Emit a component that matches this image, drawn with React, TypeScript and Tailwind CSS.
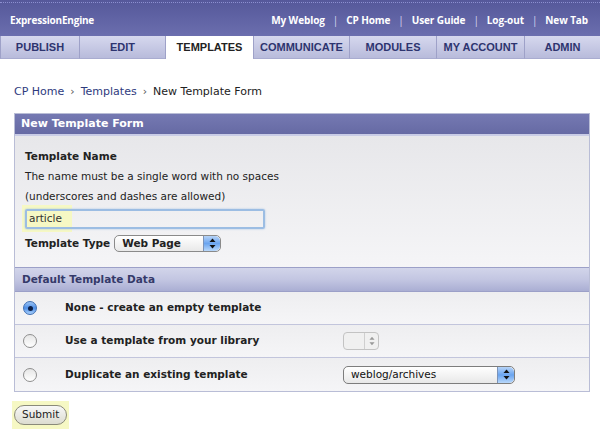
import React from 'react'

const tabs = [
  { label: 'PUBLISH', w: 'w-[79px]' },
  { label: 'EDIT', w: 'w-[86px]' },
  { label: 'TEMPLATES', w: 'w-[88px]', active: true },
  { label: 'COMMUNICATE', w: 'w-[96px]' },
  { label: 'MODULES', w: 'w-[87px]' },
  { label: 'MY ACCOUNT', w: 'w-[88px]' },
  { label: 'ADMIN', w: 'flex-1' },
]

const topLinks = ['My Weblog', 'CP Home', 'User Guide', 'Log-out', 'New Tab']

function Stepper() {
  return (
    <span className="flex h-full w-[17px] flex-col items-center justify-center rounded-r-[5px] border-l border-[#7c93b8] bg-gradient-to-b from-[#b6d3f7] via-[#6aa4ef] to-[#b9d8fa] leading-none text-[#0b1a3a]">
      <svg width="7" height="11" viewBox="0 0 7 11">
        <path d="M3.5 0.5 L6.5 4 L0.5 4 Z" fill="#111" />
        <path d="M3.5 10.5 L6.5 7 L0.5 7 Z" fill="#111" />
      </svg>
    </span>
  )
}

function Radio({ checked }: { checked?: boolean }) {
  if (checked) {
    return (
      <span className="flex h-[14px] w-[14px] items-center justify-center rounded-full border border-[#3f6fb3] bg-gradient-to-b from-[#9cc4f4] via-[#4d8ee6] to-[#a9d0fb]">
        <span className="h-[5px] w-[5px] rounded-full bg-[#0d1f45]" />
      </span>
    )
  }
  return (
    <span className="h-[14px] w-[14px] rounded-full border border-[#8e8e8e] bg-gradient-to-b from-[#e6e6e6] to-[#ffffff]" />
  )
}

export default function App() {
  return (
    <div className="h-[429px] w-[600px] overflow-hidden bg-white font-['DejaVu_Sans',sans-serif] text-[#222]">
      {/* header */}
      <div className="relative flex h-[36px] items-center justify-between bg-gradient-to-b from-[#55589a] to-[#6b6eae] pl-[10px] pr-[12px] text-white">
        <div className="absolute left-0 right-0 top-[2px] border-t border-dotted border-[#8c8fd0]" />
        <span className="pt-[4px] font-['Open_Sans',sans-serif] text-[10px] font-bold tracking-[-0.2px]">ExpressionEngine</span>
        <div className="flex items-center gap-[4px] pt-[4px] font-['Open_Sans',sans-serif] text-[10px] font-bold tracking-[-0.1px]">
          {topLinks.map((l, i) => (
            <React.Fragment key={l}>
              {i > 0 && <span className="px-[4px] font-normal text-[#d8daf2]">|</span>}
              <span>{l}</span>
            </React.Fragment>
          ))}
        </div>
      </div>

      {/* tabs */}
      <div className="flex h-[23px] bg-[#5d609f] font-['Liberation_Sans',sans-serif] text-[11px] font-bold">
        {tabs.map((t) =>
          t.active ? (
            <div key={t.label} className={`${t.w} flex items-center justify-center border-l border-[#9ea1c8] bg-white text-[#222]`}>
              {t.label}
            </div>
          ) : (
            <div
              key={t.label}
              className={`${t.w} flex items-center justify-center border-l border-[#9ea1c8] border-b border-b-[#a9acd0] bg-gradient-to-b from-[#d6d8ee] to-[#b8bbdb] text-[#2d346f]`}
            >
              {t.label}
            </div>
          ),
        )}
      </div>

      {/* breadcrumb */}
      <div className="px-[14px] pt-[26px] text-[11px] leading-[14px]">
        <span className="text-[#2e3b7e]">CP Home</span>
        <span className="px-[6px] text-[#555]">›</span>
        <span className="text-[#2e3b7e]">Templates</span>
        <span className="px-[6px] text-[#555]">›</span>
        <span className="text-[#222]">New Template Form</span>
      </div>

      {/* panel */}
      <div className="ml-[14px] mr-[10px] mt-[14px] border border-[#b9bdd6]">
        <div className="flex h-[22px] items-center border-b-[2px] border-[#c9cce6] bg-gradient-to-b from-[#7579b2] to-[#666aa4] px-[6px] text-[11px] font-bold text-white">
          New Template Form
        </div>
        <div className="bg-gradient-to-b from-[#e7e7ea] to-[#f5f5f7] px-[10px] pb-[15px] pt-[10px] text-[10.5px]">
          <div className="h-[20px] font-bold leading-[20px]">Template Name</div>
          <div className="h-[20px] leading-[20px]">The name must be a single word with no spaces</div>
          <div className="h-[21px] leading-[21px]">(underscores and dashes are allowed)</div>
          <div className="relative mt-[2px] h-[20px] w-[240px]">
            <div className="absolute -left-[3px] -top-[4px] h-[27px] w-[50px] bg-[#f6f8c4]" />
            <div className="absolute inset-0 rounded-[2px] border-2 border-[#9cbde3] shadow-[0_0_2px_#9cbde3]" />
            <div className="relative flex h-full items-center pl-[4px] text-[10.5px] text-[#333]">article</div>
          </div>
          <div className="mt-[6px] flex items-center gap-[4px]">
            <span className="font-bold">Template Type</span>
            <div className="flex h-[17px] w-[107px] items-center overflow-hidden rounded-[5px] border border-[#8a8a8a] bg-gradient-to-b from-white to-[#e9e9e9]">
              <span className="flex-1 pl-[7px] text-[10.5px] font-bold">Web Page</span>
              <Stepper />
            </div>
          </div>
        </div>

        <div className="flex h-[25px] items-center border-y border-[#9ca0c8] bg-gradient-to-b from-[#d2d5ea] via-[#c3c6e2] to-[#aaaed3] px-[7px] text-[10.5px] font-bold text-[#353a6a]">
          Default Template Data
        </div>
        {[
          { label: 'None - create an empty template', checked: true },
          { label: 'Use a template from your library', sel: 'empty' },
          { label: 'Duplicate an existing template', sel: 'weblog' },
        ].map((r, i) => (
          <div
            key={r.label}
            className={`flex h-[33px] items-center bg-gradient-to-b from-[#eeeef0] to-[#f5f5f7] text-[10.5px] font-bold ${i < 2 ? 'border-b border-[#c2c5dc]' : ''}`}
          >
            <div className="flex w-[50px] pl-[8px]">
              <Radio checked={r.checked} />
            </div>
            <span className="w-[278px]">{r.label}</span>
            {r.sel === 'empty' && (
              <div className="flex h-[18px] w-[36px] items-center overflow-hidden rounded-[4px] border border-[#c3c3c3] bg-[#f0f0f0]">
                <span className="flex-1" />
                <span className="flex h-full w-[14px] items-center justify-center border-l border-[#cfcfcf]">
                  <svg width="6" height="10" viewBox="0 0 7 11">
                    <path d="M3.5 0.5 L6.5 4 L0.5 4 Z" fill="#999" />
                    <path d="M3.5 10.5 L6.5 7 L0.5 7 Z" fill="#999" />
                  </svg>
                </span>
              </div>
            )}
            {r.sel === 'weblog' && (
              <div className="flex h-[18px] w-[172px] items-center overflow-hidden rounded-[5px] border border-[#7d7d7d] bg-gradient-to-b from-white to-[#e8e8e8]">
                <span className="flex-1 pl-[7px] text-[10.5px] font-normal text-[#111]">weblog/archives</span>
                <Stepper />
              </div>
            )}
          </div>
        ))}
      </div>

      {/* submit */}
      <div className="ml-[12px] mt-[9px] inline-flex h-[28px] items-center bg-[#f6f8c4] px-[2px]">
        <button className="h-[20px] rounded-full border border-[#8a8a7a] bg-gradient-to-b from-[#f8f8f8] to-[#dcdcd0] px-[7px] text-[10.5px] text-[#222]">
          Submit
        </button>
      </div>
    </div>
  )
}
